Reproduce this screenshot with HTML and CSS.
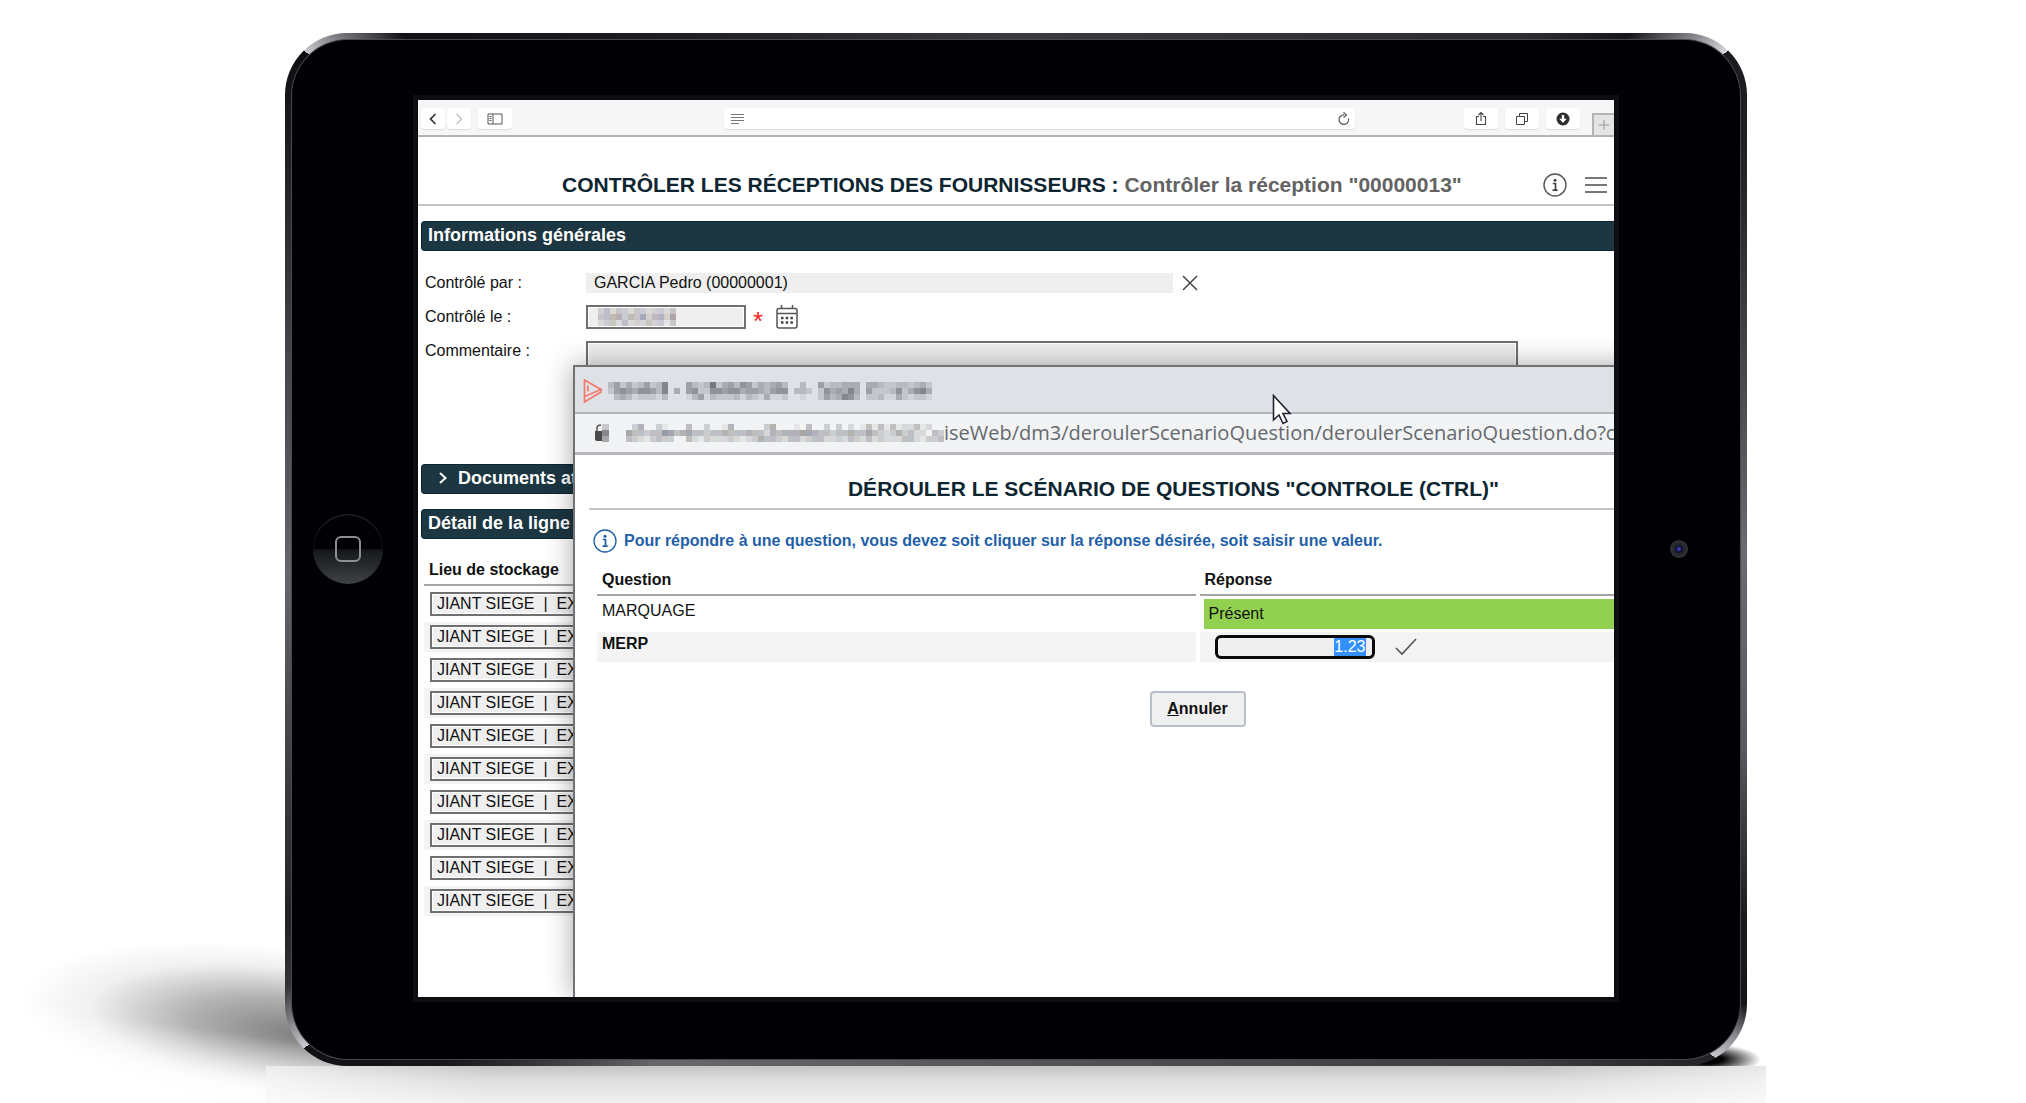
FILE: index.html
```html
<!DOCTYPE html>
<html lang="fr">
<head>
<meta charset="utf-8">
<meta name="viewport" content="width=device-width, initial-scale=1">
<title>Contrôler les réceptions des fournisseurs</title>
<link rel="stylesheet" href="styles.css">
</head>
<body>
<div class="stage">
  <div class="tablet">
    <div class="face">
      <button class="home" type="button" aria-label="Accueil"><span class="home-mark"></span></button>

      <div class="screen">
        <nav class="toolbar" aria-label="Navigateur">
          <div class="nav-pair">
            <button type="button" class="tool narrow" aria-label="Précédent"><svg width="8" height="12" viewBox="0 0 8 12"><path d="M6.500 1L1.500 6l5 5" fill="none" stroke="#333" stroke-width="1.700"/></svg></button>
            <button type="button" class="tool narrow" aria-label="Suivant"><svg width="8" height="12" viewBox="0 0 8 12"><path d="M1.500 1l5 5-5 5" fill="none" stroke="#bbb" stroke-width="1.200"/></svg></button>
          </div>
          <button type="button" class="tool" aria-label="Barre latérale"><svg width="16" height="12" viewBox="0 0 16 12"><path d="M1 1h14v10H1zM6 1v10M2.500 3.500h2M2.500 5.500h2M2.500 7.500h2" fill="none" stroke="#555"/></svg></button>
          <div class="address">
            <svg width="14" height="12" viewBox="0 0 14 12"><path d="M0 1.500h13M0 4.500h13M0 7.500h13M0 10.500h8" stroke="#777"/></svg>
            <button type="button" class="reload" aria-label="Recharger"><svg width="14" height="14" viewBox="0 0 14 14"><path d="M11.500 6.500A4.800 4.800 0 1 1 7 2.800" fill="none" stroke="#555" stroke-width="1.200"/><path d="M6.500 0.500L9.500 3 6.500 5.500" fill="none" stroke="#555" stroke-width="1.200"/></svg></button>
          </div>
          <div class="tools-right">
            <button type="button" class="tool" aria-label="Partager"><svg width="12" height="16" viewBox="0 0 12 16"><path d="M4 5.500H1.500v8h9v-8H8M6 10V1.500M3.500 4L6 1.500 8.500 4" fill="none" stroke="#444" stroke-width="1.100"/></svg></button>
            <button type="button" class="tool" aria-label="Onglets"><svg width="14" height="14" viewBox="0 0 14 14"><path d="M1.500 4.500h8v8h-8zM4.500 4V1.500h8v8H10" fill="none" stroke="#444"/></svg></button>
            <button type="button" class="tool" aria-label="Téléchargements"><svg width="14" height="14" viewBox="0 0 14 14"><circle cx="7" cy="7" r="6.500" fill="#2d2d2d"/><path d="M7 3v5" stroke="#fff" stroke-width="2.400"/><path d="M3.300 6.800h7.400L7 11z" fill="#fff"/></svg></button>
          </div>
          <button type="button" class="new-tab" aria-label="Nouvel onglet"><svg width="12" height="12" viewBox="0 0 12 12"><path d="M6 1v10M1 6h10" stroke="#999"/></svg></button>
        </nav>

        <main class="app">
          <header class="app-header">
            <h1>CONTRÔLER LES RÉCEPTIONS DES FOURNISSEURS : <span>Contrôler la réception "00000013"</span></h1>
            <div class="header-tools">
              <button type="button" class="plain" aria-label="Informations"><svg width="24" height="24" viewBox="0 0 24 24"><circle cx="12" cy="12" r="11" fill="none" stroke="#555" stroke-width="1.400"/><circle cx="12" cy="7.200" r="1.500" fill="#444"/><path d="M9.800 10.500H12.500V17M9.600 17.200h5" fill="none" stroke="#444" stroke-width="1.700"/></svg></button>
              <button type="button" class="plain" aria-label="Menu"><svg width="22" height="20" viewBox="0 0 22 20"><path d="M0 3h22M0 10h22M0 17h22" stroke="#777" stroke-width="2"/></svg></button>
            </div>
          </header>

          <h2 class="bar">Informations générales</h2>
          <form class="form">
            <label for="by">Contrôlé par :</label>
            <div class="line"><input id="by" class="flat" readonly value="GARCIA Pedro (00000001)"><button type="button" class="plain" aria-label="Effacer"><svg width="18" height="18" viewBox="0 0 18 18"><path d="M2 2l14 14M16 2L2 16" stroke="#444" stroke-width="1.500"/></svg></button></div>
            <label for="date">Contrôlé le :</label>
            <div class="line"><span class="masked"><input id="date" class="boxed"><svg class="mosaic" data-mosaic="date" width="78" height="18" aria-hidden="true"></svg></span><span class="required">*</span><button type="button" class="plain" aria-label="Calendrier"><svg width="22" height="24" viewBox="0 0 22 24"><path d="M3 3.500h16q2 0 2 2V21q0 2-2 2H3q-2 0-2-2V5.500q0-2 2-2zM1 8.500h20M5.500 0v3M16.500 0v3" fill="none" stroke="#555" stroke-width="1.500"/><path d="M5 13h12M5 17.500h12" stroke="#444" stroke-width="2.500" stroke-dasharray="2.500 2.200"/></svg></button></div>
            <label for="comment">Commentaire :</label>
            <textarea id="comment" class="boxed"></textarea>
          </form>

          <h2 class="bar fold"><button type="button"><svg width="10" height="14" viewBox="0 0 10 14"><path d="M2 2l5.500 5L2 12" fill="none" stroke="#fff" stroke-width="2"/></svg>Documents at</button></h2>
          <h2 class="bar">Détail de la ligne</h2>
          <table class="stock">
            <thead><tr><th>Lieu de stockage</th></tr></thead>
            <tbody>
              <tr><td><input aria-label="Lieu 1" class="boxed" value="JIANT SIEGE  |  EX"></td></tr>
              <tr><td><input aria-label="Lieu 2" class="boxed" value="JIANT SIEGE  |  EX"></td></tr>
              <tr><td><input aria-label="Lieu 3" class="boxed" value="JIANT SIEGE  |  EX"></td></tr>
              <tr><td><input aria-label="Lieu 4" class="boxed" value="JIANT SIEGE  |  EX"></td></tr>
              <tr><td><input aria-label="Lieu 5" class="boxed" value="JIANT SIEGE  |  EX"></td></tr>
              <tr><td><input aria-label="Lieu 6" class="boxed" value="JIANT SIEGE  |  EX"></td></tr>
              <tr><td><input aria-label="Lieu 7" class="boxed" value="JIANT SIEGE  |  EX"></td></tr>
              <tr><td><input aria-label="Lieu 8" class="boxed" value="JIANT SIEGE  |  EX"></td></tr>
              <tr><td><input aria-label="Lieu 9" class="boxed" value="JIANT SIEGE  |  EX"></td></tr>
              <tr><td><input aria-label="Lieu 10" class="boxed" value="JIANT SIEGE  |  EX"></td></tr>
            </tbody>
          </table>
        </main>

        <section class="popup" aria-label="Scénario de questions">
          <div class="popup-title">
            <svg width="20" height="24" viewBox="0 0 20 24"><path d="M1.500 1L18 10.500 1.500 17.500zM5 6.500v6M1.500 17.500V23L18 13V9.500" fill="none" stroke="#f4796d" stroke-width="1.700"/></svg>
            <svg data-mosaic="title" width="324" height="18" aria-hidden="true"></svg>
          </div>
          <div class="popup-url">
            <svg class="lock" width="14" height="18" viewBox="0 0 14 18"><path d="M2 7V4q0-3 4-3" fill="none" stroke="#555" stroke-width="1.500"/><path d="M0 7h7v10H2q-2 0-2-2z" fill="#4a4a4a"/><path d="M7 0h7v6H7z" fill="#c6c8ca"/><path d="M7 6h7v6H7z" fill="#85878a"/><path d="M7 12h7v6H7z" fill="#a6a8aa"/></svg>
            <svg data-mosaic="url" width="324" height="18" aria-hidden="true"></svg>
            <span>iseWeb/dm3/deroulerScenarioQuestion/deroulerScenarioQuestion.do?cr</span>
          </div>
          <h2 class="popup-heading">DÉROULER LE SCÉNARIO DE QUESTIONS "CONTROLE (CTRL)"</h2>
          <div class="popup-body">
            <p class="hint"><svg width="24" height="24" viewBox="0 0 24 24"><circle cx="12" cy="12" r="11" fill="none" stroke="#1f5fa8" stroke-width="1.300"/><circle cx="12" cy="7.200" r="1.500" fill="#1f5fa8"/><path d="M9.800 10.500H12.500V17M9.600 17.200h5" fill="none" stroke="#1f5fa8" stroke-width="1.700"/></svg>Pour répondre à une question, vous devez soit cliquer sur la réponse désirée, soit saisir une valeur.</p>
            <table class="questions">
              <thead><tr><th>Question</th><th>Réponse</th></tr></thead>
              <tbody>
                <tr><td>MARQUAGE</td><td class="answer"><button type="button" class="choice">Présent</button></td></tr>
                <tr class="current"><td><label for="merp">MERP</label></td><td class="answer"><div class="entry"><input id="merp" value="1.23"><button type="button" class="plain" aria-label="Valider"><svg width="22" height="18" viewBox="0 0 22 18"><path d="M1 10l6 6L21 1" fill="none" stroke="#555" stroke-width="1.600"/></svg></button></div></td></tr>
              </tbody>
            </table>
            <div class="actions"><button type="button" class="cancel"><u>A</u>nnuler</button></div>
          </div>
          <svg class="pointer" width="20" height="32" viewBox="0 0 20 32"><path d="M1.500 1.500v24.500l5.500-5 4 8.500 4-2-4-8h7z" fill="#fff" stroke="#223" stroke-width="1.600"/></svg>
        </section>
      </div>

      <span class="camera"></span>
    </div>
  </div>
</div>
<script src="mosaic.js"></script>
</body>
</html>
```
FILE: mosaic.js
```js
// Each digit is one 6px tile of masked text: 0 is empty, 9 is darkest.
const masks = {
  title: [
    "352423523700053238245365243453003005233444044322332342",
    "256546653704056226656645543566033202645474052223624674",
    "034312221300013513222313214112001002534763022311421221"
  ],
  url: [
    "003500310004003001500000350001040030302014141412241200",
    "064434476456443445444544254555665443445446432353422043",
    "043213433004213222321235443244234422324324232224421334"
  ],
  date: ["3424324323324", "4456354635537", "2342423243314"]
};
const tints = { title: ["60,62,66"], url: ["80,85,95", "90,80,70", "75,90,105", "90,75,100"], date: ["120,105,115", "120,110,90", "85,90,130"] };

document.querySelectorAll("[data-mosaic]").forEach(svg => {
  const name = svg.dataset.mosaic;
  masks[name].forEach((row, y) => [...row].forEach((level, x) => {
    if (level === "0") return;
    const tile = document.createElementNS("http://www.w3.org/2000/svg", "rect");
    tile.setAttribute("x", x * 6);
    tile.setAttribute("y", y * 6);
    tile.setAttribute("width", 6);
    tile.setAttribute("height", 6);
    tile.setAttribute("fill", `rgba(${tints[name][(x * 5 + y * 3) % tints[name].length]},${level * 0.08})`);
    svg.append(tile);
  }));
});

const entry = document.getElementById("merp");
entry.focus({ preventScroll: true });
entry.select();
```
FILE: styles.css
```css
* { box-sizing: border-box; }

body {
  margin: 0;
  background: #fff;
  color: #111;
  font: 16px/20px "Liberation Sans", Arial, sans-serif;
}

button, input, textarea { font: inherit; color: inherit; margin: 0; }
button { border: 0; padding: 0; background: none; display: flex; align-items: center; justify-content: center; }
svg { display: block; flex: none; }
h1, h2, p { margin: 0; }

/* Tablet */
.stage {
  position: relative;
  isolation: isolate;
  display: flex;
  min-height: 100vh;
  padding: 33px 279px 37px 285px;
  overflow: hidden;
}
.stage::before {
  content: "";
  position: absolute;
  left: 20px;
  bottom: -16px;
  width: 560px;
  height: 170px;
  background: radial-gradient(closest-side, rgba(0,0,0,.5), rgba(0,0,0,.3) 40%, rgba(0,0,0,.06) 75%, transparent);
  transform: rotate(8deg);
  mask-image: linear-gradient(#000 55%, rgba(0,0,0,.15) 85%);
}
.stage::after {
  content: "";
  position: absolute;
  left: 266px;
  right: 260px;
  bottom: 0;
  height: 37px;
  background: linear-gradient(90deg, rgba(255,255,255,.7), transparent 15%, transparent 85%, rgba(255,255,255,.6)), linear-gradient(#c4c4c4, #dedede 40%, #f1f1f1);
}
.tablet {
  position: relative;
  display: flex;
  flex: 1;
  min-width: 0;
  padding: 7px;
  border-radius: 62px;
  background: conic-gradient(#3a3a40 0deg, #2c2c31 45deg, #15151a 50deg, #8a8a90 53deg, #d8d8dd 55deg, #1a1a1e 55deg, #222226 62deg, #6a6a70 90deg, #5a5a60 105deg, #1a1a1e 117deg, #15151a 122deg, #888890 124deg, #c8c8cc 126deg, #222226 126deg, #3c3c42 135deg, #55555a 180deg, #66666c 215deg, #18181c 228deg, #111115 235deg, #ccccd4 235deg, #333338 239deg, #222226 243deg, #66666c 268deg, #44444a 285deg, #0d0d10 305deg, #c8c8d0 305deg, #111115 310deg, #222226 330deg, #3a3a40 360deg);
}
.tablet::after {
  content: "";
  position: absolute;
  z-index: -1;
  right: -14px;
  bottom: 0;
  width: 110px;
  height: 22px;
  background: radial-gradient(farthest-side at 50% 70%, #000 30%, transparent);
}
.face {
  flex: 1;
  min-width: 0;
  display: grid;
  grid-template-columns: 126px minmax(0, 1fr) 126px;
  align-items: center;
  padding: 60px 0 62px;
  border-radius: 56px;
  background: #010104;
  box-shadow: 0 0 0 1px #48484e;
}
.home {
  width: 70px;
  height: 70px;
  margin-left: 21px;
  border-radius: 50%;
  background: linear-gradient(#010104 50%, #15181b 51%, #3e4145);
  box-shadow: inset 0 1px 1px #2c2e32;
}
.home-mark { width: 26px; height: 26px; border: 2px solid #8c8f92; border-radius: 6px; }
.camera {
  width: 18px;
  height: 18px;
  margin-left: 56px;
  border-radius: 50%;
  background: radial-gradient(#3a3ac0 8%, #101030 22%, #24272b 40%, #393c40);
}
.screen {
  position: relative;
  align-self: stretch;
  display: flex;
  flex-direction: column;
  overflow: hidden;
  background: #fff;
  outline: 5px solid #0b0d11;
}

/* Browser toolbar */
.toolbar {
  display: flex;
  align-items: center;
  height: 37px;
  padding: 8px 0 6px 3px;
  background: #f6f6f6;
  border-bottom: 2px solid #b4b4b4;
}
.nav-pair { display: flex; gap: 2px; margin-right: 7px; }
.tool, .address {
  height: 21px;
  border-radius: 4px;
  background: #fff;
  box-shadow: 0 1px 1px #ddd;
}
.tool { width: 34px; }
.narrow { width: 24px; }
.address {
  flex: 1;
  display: flex;
  align-items: center;
  justify-content: space-between;
  margin: 0 109px 0 212px;
  padding: 0 4px 0 7px;
}
.tools-right { display: flex; gap: 7px; }
.new-tab {
  align-self: flex-end;
  width: 22px;
  height: 22px;
  margin: 0 0 -6px 12px;
  background: #e4e4e4;
  border: solid #b4b4b4;
  border-width: 2px 0 0 2px;
}

/* Reception form */
.app-header {
  display: flex;
  align-items: center;
  height: 69px;
  padding: 29px 7px 0 144px;
  border-bottom: 2px solid #c4c4c4;
}
h1, .popup-heading { font-size: 21px; line-height: 24px; font-weight: bold; color: #0d2531; white-space: nowrap; }
h1 span { color: #636363; }
.header-tools { display: flex; align-items: center; gap: 18px; margin-left: auto; }
.bar {
  display: flex;
  align-items: center;
  height: 30px;
  margin: 15px 0 0 3px;
  padding: 0 0 2px 6px;
  border: 1px solid #0b2631;
  border-right: 0;
  border-radius: 4px 0 0 4px;
  background: #1c3642;
  color: #fff;
  font-size: 18px;
}
.fold button { gap: 10px; margin-left: 10px; }
.form {
  display: grid;
  grid-template-columns: 161px minmax(0, 1fr);
  grid-template-rows: 20px 24px 108px;
  row-gap: 12px;
  padding: 22px 96px 0 7px;
}
.line { display: flex; align-items: center; height: 100%; }
.form label { align-self: center; }
.form label:last-of-type { align-self: start; }
.flat {
  width: 587px;
  height: 20px;
  margin-right: 8px;
  padding: 0 8px;
  border: 0;
  background: #efefef;
}
.boxed {
  border: 2px solid #707070;
  background: #efefef;
  box-shadow: inset 0 0 0 1px #fff;
  border-radius: 0;
}
.masked { position: relative; display: flex; }
.masked .boxed { width: 160px; height: 24px; }
.mosaic { position: absolute; left: 12px; top: 3px; }
.required { width: 30px; padding-left: 7px; color: #f22; font-size: 26px; line-height: 16px; padding-top: 8px; }
textarea { width: 100%; height: 108px; resize: none; display: block; }

.stock { width: 100%; padding-left: 6px; border-spacing: 0 3px; }
.stock th { height: 44px; padding: 13px 5px 0; border-bottom: 2px solid #a4a4a4; text-align: left; }
.stock td { height: 30px; padding: 0 6px; }
.stock tr:nth-child(even) td { background: #f4f4f4; }
.stock input { display: block; width: 300px; height: 24px; padding: 0 5px; }

/* Scenario window, lying over the form */
.popup {
  position: absolute;
  left: 155px;
  top: 265px;
  right: -188px;
  bottom: 0;
  border: solid #707276;
  border-width: 2px 0 0 2px;
  background: #fff;
  box-shadow: 0 0 26px rgba(0,0,0,.35);
}
.popup-title {
  display: flex;
  align-items: center;
  gap: 5px;
  height: 45px;
  padding: 2px 0 0 8px;
  background: #dee1e6;
}
.popup-url {
  display: flex;
  align-items: center;
  height: 43px;
  padding: 0 0 0 20px;
  border-top: 2px solid #b2b4b7;
  border-bottom: 3px solid #b6b8bb;
  background: #f1f3f4;
  color: #66696e;
  font: 20px/28px "Open Sans", sans-serif;
  white-space: nowrap;
}
.lock { margin-right: 11px; }
.popup-heading {
  height: 55px;
  margin-left: 14px;
  padding: 22px 44px 0 0;
  border-bottom: 2px solid #c4c4c4;
  text-align: center;
}
.popup-body { padding: 18px 0 0 18px; }
.hint { display: flex; align-items: center; gap: 7px; height: 26px; color: #1f5fa8; font-weight: bold; }
.questions { width: 100%; table-layout: fixed; border-spacing: 4px 3px; }
.questions th { height: 39px; padding: 8px 5px 0; border-bottom: 2px solid #a4a4a4; text-align: left; }
.questions td { height: 30px; padding: 0 5px 6px; vertical-align: middle; }
.questions .answer { padding: 0 0 0 4px; }
.current td { background: #f4f4f4; font-weight: bold; }
.choice { width: 100%; height: 30px; justify-content: flex-start; padding-left: 5px; background: #92d050; }
.entry { display: flex; align-items: center; gap: 20px; padding-left: 11px; font-weight: normal; }
.entry input {
  width: 160px;
  height: 24px;
  padding: 0 6px;
  border: 3px solid #0a0a0a;
  border-radius: 6px;
  background: #efefef;
  outline: 0;
  text-align: right;
}
.entry input::selection { background: #3390ff; color: #fff; }
.actions { display: flex; justify-content: center; padding-top: 26px; }
.cancel {
  width: 96px;
  height: 36px;
  border: 2px solid #b9bfc7;
  border-radius: 4px;
  background: #f0f0f0;
  font-weight: bold;
}
.pointer { position: absolute; left: 697px; top: 27px; }
```
